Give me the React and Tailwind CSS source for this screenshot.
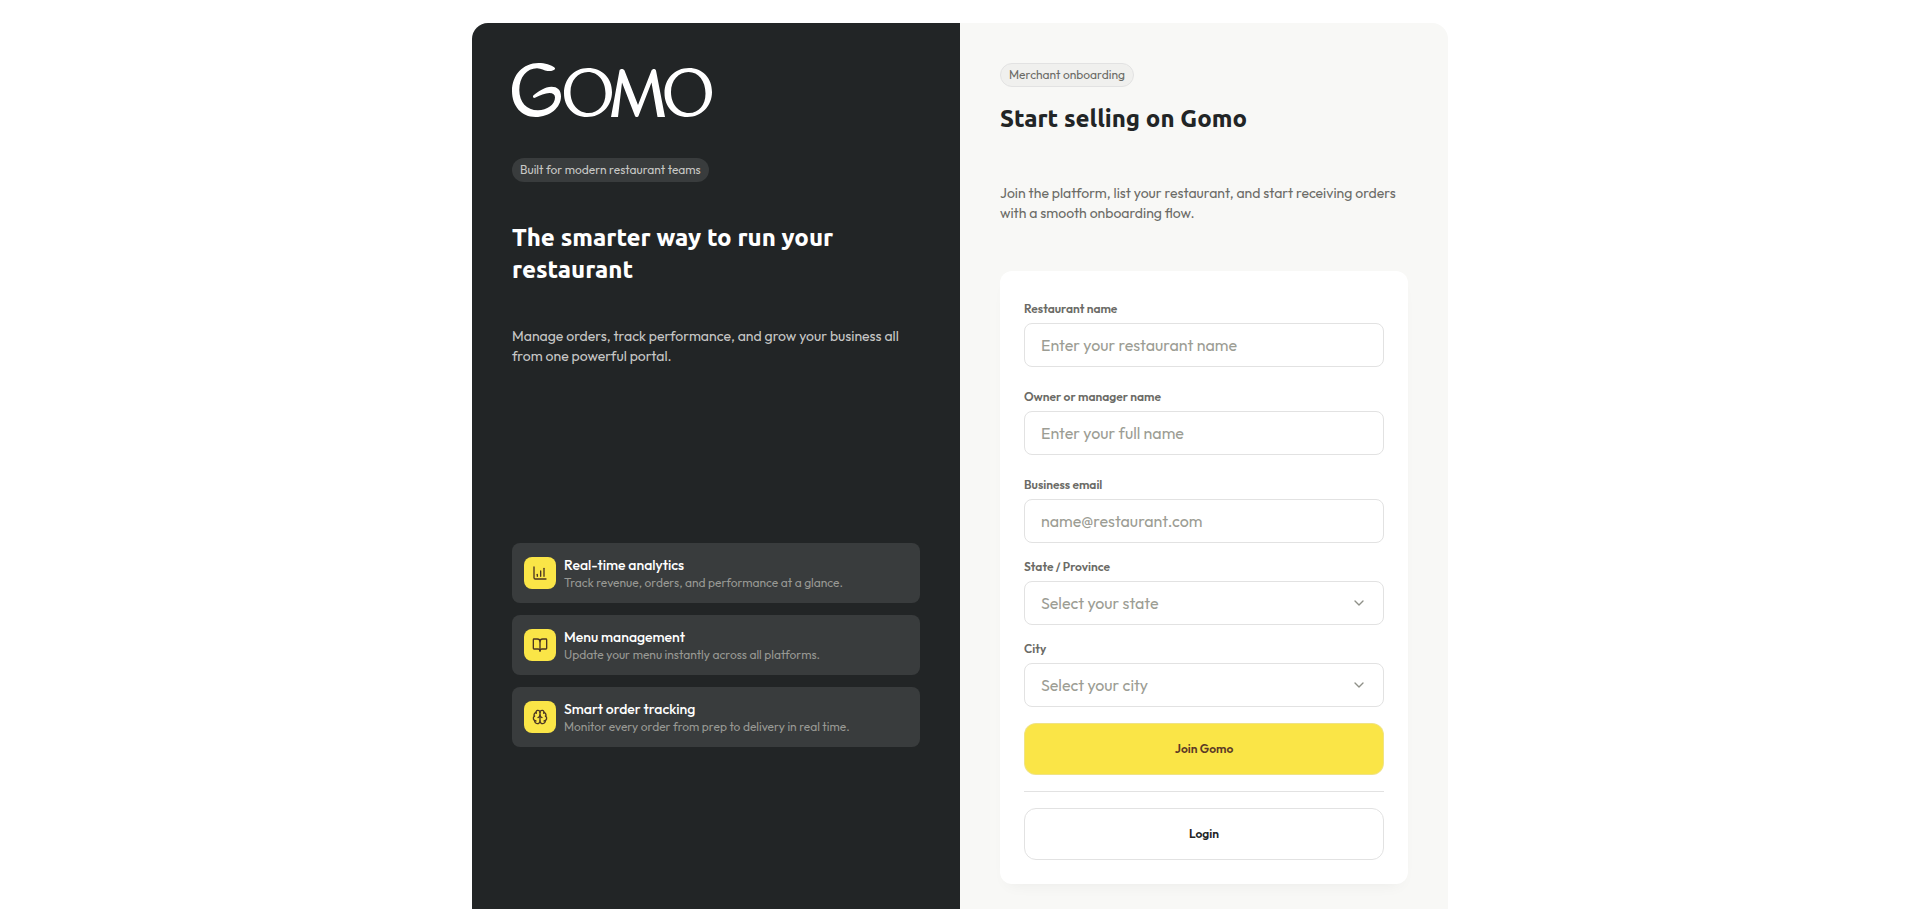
import { ChartColumnIncreasing, BookOpen, Brain, ChevronDown } from "lucide-react";

const features = [
  { icon: ChartColumnIncreasing, title: "Real-time analytics", text: "Track revenue, orders, and performance at a glance." },
  { icon: BookOpen, title: "Menu management", text: "Update your menu instantly across all platforms." },
  { icon: Brain, title: "Smart order tracking", text: "Monitor every order from prep to delivery in real time." },
];

function Logo() {
  return (
    <svg className="h-[54px] w-[200px] text-white" viewBox="0 0 200 54" fill="currentColor" role="img" aria-label="Gomo">
      <path d="M43 5C39 1.500 33 0 26.500 0C11 0 0 12 0 28C0 43 9.500 54 23.500 54C38 54 49 44.500 49 33.500C49 27 45.500 23.700 39.500 23.700C33 23.700 26 28.500 21.300 32.500C20.300 33.600 21.300 35.300 23 34.800C28 32.200 33 29.900 37.500 29.900C41 29.900 43 31.500 43 34.500C43 41.500 35 47.300 26 47.300C14.500 47.300 7.300 39 7.300 27C7.300 14 15 5.300 25 5.300C29.500 5.300 32 7.700 35.500 8C38.500 8.300 43.500 7.500 43 5Z" />
      <path fillRule="evenodd" d="M76 5C90 5 100 15 100 29C100 43 89.500 54 75 54C61 54 52 43.500 52 30C52 16 62 5 76 5ZM76 9C66 9 58.500 17.500 58.500 29C58.500 41 66 50 76.500 50C86.500 50 93.500 42 93.500 30.500C93.500 18 86 9 76 9Z" />
      <path d="M99 54L107.500 7.500C108 5.500 111.500 5.500 112.500 7.500L126 42L139.500 7.500C140.500 5.500 143.500 5.500 144 7.500L153 54H145.500L139.500 19.500L126.500 53C126 54.300 123.500 54.300 123 53L110 19.500L106 54Z" />
      <path fillRule="evenodd" d="M177 5C190.500 5 200 15 200 29C200 43 189.500 54 175.500 54C161.500 54 152.500 43.500 152.500 30C152.500 16 162.500 5 177 5ZM176.500 9C166.500 9 159 17.500 159 29C159 41 166.500 50 177 50C187 50 193.500 42 193.500 30.500C193.500 18 186.500 9 176.500 9Z" />
    </svg>
  );
}

function TextField({ id, label, type = "text", placeholder }) {
  return (
    <div className="flex flex-col gap-1.5 pt-1.5">
      <label htmlFor={id} className="text-[12px] leading-4 font-semibold text-[#6b6b66]">{label}</label>
      <input id={id} type={type} placeholder={placeholder} className="h-11 w-full rounded-lg border border-[#e2e2e2] bg-white px-4 text-[16px] text-[#222526] placeholder:text-[#9c9d94]" />
    </div>
  );
}

function SelectField({ id, label, placeholder }) {
  return (
    <div className="flex flex-col gap-1.5">
      <label htmlFor={id} className="text-[12px] leading-4 font-semibold text-[#6b6b66]">{label}</label>
      <div className="relative">
        <select id={id} defaultValue="" className="h-11 w-full appearance-none rounded-lg border border-[#e2e2e2] bg-white px-4 text-[16px] text-[#9c9d94]">
          <option value="">{placeholder}</option>
        </select>
        <ChevronDown className="pointer-events-none absolute top-3.5 right-[17px] size-4 text-[#8f9088]" />
      </div>
    </div>
  );
}

export default function App() {
  return (
    <main className="min-h-screen bg-white py-[23px] pr-[22px] pl-6 font-['Outfit','Lato',sans-serif]">
      <div className="mx-auto grid max-w-[976px] grid-cols-2 overflow-hidden rounded-2xl">
        <section className="flex flex-col items-start bg-[#222526] p-10">
          <Logo />
          <span className="mt-[41px] flex h-6 items-center rounded-full bg-[#393c3d] px-2 text-[12px] leading-4 text-[#c8c8c6]">Built for modern restaurant teams</span>
          <h1 className="mt-10 font-['Ubuntu','Noto_Sans',sans-serif] text-[24px] leading-8 font-extrabold text-white">The smarter way to run your restaurant</h1>
          <p className="mt-10 text-[14px] leading-5 text-[#c8c8c6]">Manage orders, track performance, and grow your business all from one powerful portal.</p>
          <ul className="mt-[177px] flex w-full flex-col gap-3">
            {features.map(({ icon: Icon, title, text }) => (
              <li key={title} className="flex h-[60px] items-center gap-2 rounded-lg bg-[#393c3d] px-3">
                <span className="flex size-8 items-center justify-center rounded-lg bg-[#fae547] text-[#4a3423]"><Icon className="size-4" strokeWidth={2} /></span>
                <div className="flex flex-col">
                  <h2 className="text-[14px] leading-5 font-medium text-white">{title}</h2>
                  <p className="text-[12px] leading-4 text-[#989994]">{text}</p>
                </div>
              </li>
            ))}
          </ul>
        </section>

        <section className="flex flex-col items-start bg-[#f8f8f6] p-10">
          <span className="flex h-6 items-center rounded-full border border-[#e2e2e2] bg-[#f0f0ee] px-2 text-[12px] leading-4 text-[#6b6b66]">Merchant onboarding</span>
          <h2 className="mt-4 font-['Ubuntu','Noto_Sans',sans-serif] text-[24px] leading-8 font-extrabold text-[#222526]">Start selling on Gomo</h2>
          <p className="mt-12 text-[14px] leading-5 text-[#6b6b66]">Join the platform, list your restaurant, and start receiving orders with a smooth onboarding flow.</p>
          <form className="mt-12 flex w-full flex-col gap-4 rounded-xl bg-white p-6 shadow-[0_8px_16px_-8px_rgba(0,0,0,0.06)]">
            <TextField id="restaurant" label="Restaurant name" placeholder="Enter your restaurant name" />
            <TextField id="owner" label="Owner or manager name" placeholder="Enter your full name" />
            <TextField id="email" label="Business email" type="email" placeholder="name@restaurant.com" />
            <SelectField id="state" label="State / Province" placeholder="Select your state" />
            <SelectField id="city" label="City" placeholder="Select your city" />
            <button type="submit" className="h-[52px] w-full rounded-xl border border-[#e2e2e2]/40 bg-[#fae547] text-[12px] font-semibold text-[#5c3a26]">Join Gomo</button>
            <hr className="border-[#e2e2e2]" />
            <button type="button" className="h-[52px] w-full rounded-xl border border-[#e2e2e2] bg-white text-[12px] font-semibold text-[#222526]">Login</button>
          </form>
        </section>
      </div>
    </main>
  );
}
